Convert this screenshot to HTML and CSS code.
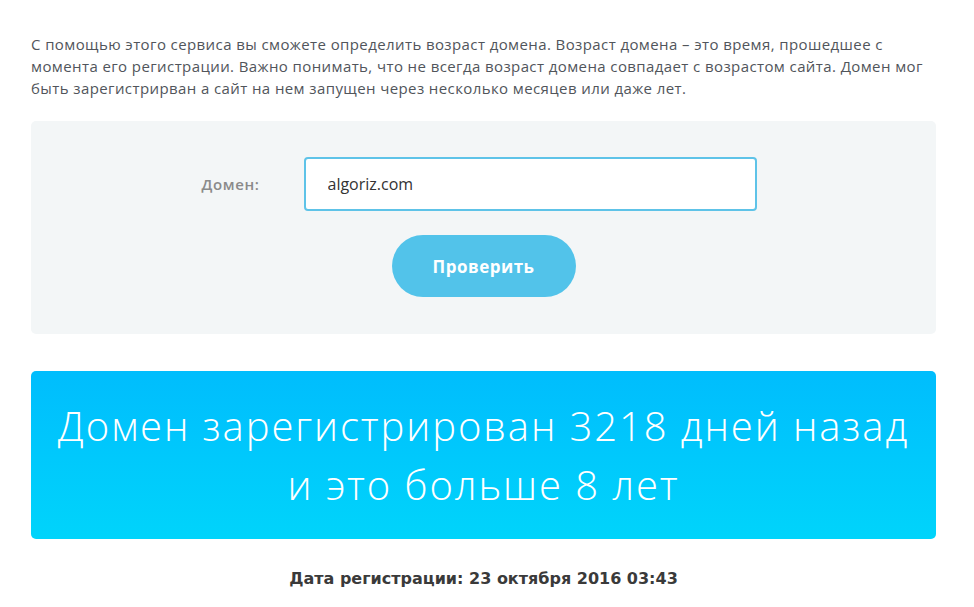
FILE: index.html
```html
<!DOCTYPE html>
<html lang="ru">
<head>
    <meta charset="UTF-8">
    <meta name="viewport" content="width=device-width, initial-scale=1.0">
    <title>Возраст домена</title>
    <link rel="stylesheet" href="styles.css">
</head>
<body>
    <div class="container">
        <p class="intro">С помощью этого сервиса вы сможете определить возраст домена. Возраст домена – это время, прошедшее с момента его регистрации. Важно понимать, что не всегда возраст домена совпадает с возрастом сайта. Домен мог быть зарегистрирван а сайт на нем запущен через несколько месяцев или даже лет.</p>

        <form class="check-form">
            <div class="form-row">
                <label class="form-label" for="domain">Домен:</label>
                <input class="form-input" id="domain" type="text" value="algoriz.com">
            </div>
            <button class="check-button" type="button">Проверить</button>
        </form>

        <div class="result-box">
            Домен зарегистрирован 3218 дней назад<br>и это больше 8 лет
        </div>

        <p class="reg-date">Дата регистрации: 23 октября 2016 03:43</p>
    </div>
</body>
</html>
```

FILE: styles.css
```css
body {
    margin: 0;
    background: #fff;
    color: #555;
    font-family: "Open Sans", Arial, sans-serif;
}

.container {
    padding: 33px 38px 0 31px;
}

.intro {
    margin: 0 0 22px;
    font-size: 15px;
    font-weight: 500;
    letter-spacing: 0.4px;
    line-height: 22px;
    color: #51555b;
}

.check-form {
    background: #f3f6f7;
    border-radius: 5px;
    padding: 36px 0 37px;
    display: flex;
    flex-direction: column;
    align-items: center;
}

.form-row {
    display: flex;
    align-items: center;
    margin-left: -9px;
}

.form-label {
    width: 102px;
    font-size: 15px;
    font-weight: 600;
    letter-spacing: 0.6px;
    color: #8a8a8a;
}

.form-input {
    box-sizing: border-box;
    width: 453px;
    height: 54px;
    padding: 0 22px;
    border: 2px solid #5ec3e8;
    border-radius: 4px;
    font-family: inherit;
    font-size: 16px;
    color: #333;
    outline: none;
}

.check-button {
    margin-top: 24px;
    width: 184px;
    height: 62px;
    border: none;
    border-radius: 31px;
    background: #52c3ea;
    color: #fff;
    font-family: inherit;
    font-size: 17px;
    font-weight: 700;
    letter-spacing: 0.5px;
    cursor: pointer;
}

.result-box {
    margin-top: 37px;
    height: 168px;
    border-radius: 5px;
    background: linear-gradient(#00bdfd, #00d4fb);
    color: #fff;
    font-size: 40px;
    font-weight: 300;
    letter-spacing: 1.9px;
    line-height: 59px;
    text-align: center;
    display: flex;
    align-items: center;
    justify-content: center;
}

.reg-date {
    margin: 30px 0 0;
    text-align: center;
    font-family: "DejaVu Sans", sans-serif;
    font-size: 16px;
    font-weight: 700;
    color: #3a3a3a;
}
```
